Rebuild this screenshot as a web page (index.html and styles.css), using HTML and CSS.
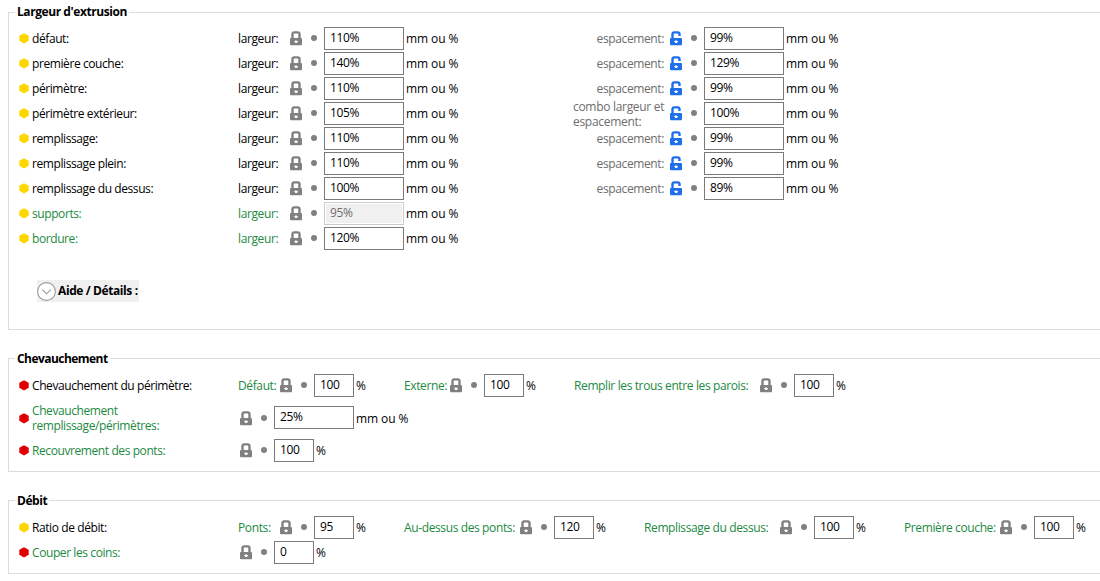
FILE: index.html
```html
<!DOCTYPE html>
<html lang="fr">
<head>
<meta charset="utf-8">
<title>Largeur d'extrusion</title>
<link rel="stylesheet" href="styles.css">
</head>
<body>
<svg class="defs" aria-hidden="true">
  <symbol id="hex" viewBox="0 0 10 11"><path d="M5 .2 9.7 2.8v5L5 10.4.3 7.8v-5z"/></symbol>
  <symbol id="lock" viewBox="0 0 12 15"><path d="M2.5 8V3.2Q2.5 1.4 4.3 1.4H7.7Q9.5 1.4 9.5 3.2V8" fill="none" stroke="currentColor" stroke-width="2.4"/><rect y="7" width="12" height="7.2" rx="1"/><path d="M4 10.2h1.4V9l2.8 1.5L6.9 12H5V11H4z" fill="#fff"/></symbol>
  <symbol id="unlock" viewBox="0 0 12 15"><path d="M2.5 8V3.2Q2.5 1.4 4.3 1.4H7.7Q9.5 1.4 9.5 3.2V5" fill="none" stroke="currentColor" stroke-width="2.4"/><rect y="7" width="12" height="7.2" rx="1"/><path d="M4 10.2h1.4V9l2.8 1.5L6.9 12H5V11H4z" fill="#fff"/></symbol>
  <symbol id="dot" viewBox="0 0 6 7"><circle cx="3" cy="3" r="3"/></symbol>
</svg>

<section class="group extrusion">
  <h2>Largeur d'extrusion</h2>
  <div class="rows">
    <div class="row"><svg class="hex"><use href="#hex"/></svg><span class="name">défaut:</span>
      <div class="field"><span class="label">largeur:</span><svg class="lock"><use href="#lock"/></svg><svg class="dot"><use href="#dot"/></svg><span class="input wide">110%</span><span class="unit">mm ou %</span></div>
      <div class="field muted"><span class="label">espacement:</span><svg class="lock open"><use href="#unlock"/></svg><svg class="dot"><use href="#dot"/></svg><span class="input wide">99%</span><span class="unit">mm ou %</span></div></div>
    <div class="row"><svg class="hex"><use href="#hex"/></svg><span class="name">première couche:</span>
      <div class="field"><span class="label">largeur:</span><svg class="lock"><use href="#lock"/></svg><svg class="dot"><use href="#dot"/></svg><span class="input wide">140%</span><span class="unit">mm ou %</span></div>
      <div class="field muted"><span class="label">espacement:</span><svg class="lock open"><use href="#unlock"/></svg><svg class="dot"><use href="#dot"/></svg><span class="input wide">129%</span><span class="unit">mm ou %</span></div></div>
    <div class="row"><svg class="hex"><use href="#hex"/></svg><span class="name">périmètre:</span>
      <div class="field"><span class="label">largeur:</span><svg class="lock"><use href="#lock"/></svg><svg class="dot"><use href="#dot"/></svg><span class="input wide">110%</span><span class="unit">mm ou %</span></div>
      <div class="field muted"><span class="label">espacement:</span><svg class="lock open"><use href="#unlock"/></svg><svg class="dot"><use href="#dot"/></svg><span class="input wide">99%</span><span class="unit">mm ou %</span></div></div>
    <div class="row"><svg class="hex"><use href="#hex"/></svg><span class="name">périmètre extérieur:</span>
      <div class="field"><span class="label">largeur:</span><svg class="lock"><use href="#lock"/></svg><svg class="dot"><use href="#dot"/></svg><span class="input wide">105%</span><span class="unit">mm ou %</span></div>
      <div class="field muted"><span class="label combo">combo largeur et<br>espacement:</span><svg class="lock open"><use href="#unlock"/></svg><svg class="dot"><use href="#dot"/></svg><span class="input wide">100%</span><span class="unit">mm ou %</span></div></div>
    <div class="row"><svg class="hex"><use href="#hex"/></svg><span class="name">remplissage:</span>
      <div class="field"><span class="label">largeur:</span><svg class="lock"><use href="#lock"/></svg><svg class="dot"><use href="#dot"/></svg><span class="input wide">110%</span><span class="unit">mm ou %</span></div>
      <div class="field muted"><span class="label">espacement:</span><svg class="lock open"><use href="#unlock"/></svg><svg class="dot"><use href="#dot"/></svg><span class="input wide">99%</span><span class="unit">mm ou %</span></div></div>
    <div class="row"><svg class="hex"><use href="#hex"/></svg><span class="name">remplissage plein:</span>
      <div class="field"><span class="label">largeur:</span><svg class="lock"><use href="#lock"/></svg><svg class="dot"><use href="#dot"/></svg><span class="input wide">110%</span><span class="unit">mm ou %</span></div>
      <div class="field muted"><span class="label">espacement:</span><svg class="lock open"><use href="#unlock"/></svg><svg class="dot"><use href="#dot"/></svg><span class="input wide">99%</span><span class="unit">mm ou %</span></div></div>
    <div class="row"><svg class="hex"><use href="#hex"/></svg><span class="name">remplissage du dessus:</span>
      <div class="field"><span class="label">largeur:</span><svg class="lock"><use href="#lock"/></svg><svg class="dot"><use href="#dot"/></svg><span class="input wide">100%</span><span class="unit">mm ou %</span></div>
      <div class="field muted"><span class="label">espacement:</span><svg class="lock open"><use href="#unlock"/></svg><svg class="dot"><use href="#dot"/></svg><span class="input wide">89%</span><span class="unit">mm ou %</span></div></div>
    <div class="row"><svg class="hex"><use href="#hex"/></svg><span class="name green">supports:</span>
      <div class="field"><span class="label green">largeur:</span><svg class="lock"><use href="#lock"/></svg><svg class="dot"><use href="#dot"/></svg><span class="input wide disabled">95%</span><span class="unit">mm ou %</span></div></div>
    <div class="row"><svg class="hex"><use href="#hex"/></svg><span class="name green">bordure:</span>
      <div class="field"><span class="label green">largeur:</span><svg class="lock"><use href="#lock"/></svg><svg class="dot"><use href="#dot"/></svg><span class="input wide">120%</span><span class="unit">mm ou %</span></div></div>
  </div>
  <div class="help"><svg class="chevron" viewBox="0 0 19 19"><circle cx="9.5" cy="9.5" r="8.9"/><path d="M5.2 7.6 9.5 11.8 13.8 7.6"/></svg><span>Aide / Détails :</span></div>
</section>

<section class="group overlap">
  <h2>Chevauchement</h2>
  <div class="rows">
    <div class="row"><svg class="hex red"><use href="#hex"/></svg><span class="name">Chevauchement du périmètre:</span>
      <div class="field"><span class="label green">Défaut:</span><svg class="lock"><use href="#lock"/></svg><svg class="dot"><use href="#dot"/></svg><span class="input">100</span><span class="unit">%</span></div>
      <div class="field"><span class="label green">Externe:</span><svg class="lock"><use href="#lock"/></svg><svg class="dot"><use href="#dot"/></svg><span class="input">100</span><span class="unit">%</span></div>
      <div class="field"><span class="label green">Remplir les trous entre les parois:</span><svg class="lock"><use href="#lock"/></svg><svg class="dot"><use href="#dot"/></svg><span class="input">100</span><span class="unit">%</span></div></div>
    <div class="row double"><svg class="hex red"><use href="#hex"/></svg><span class="name green">Chevauchement<br>remplissage/périmètres:</span>
      <div class="field bare"><svg class="lock"><use href="#lock"/></svg><svg class="dot"><use href="#dot"/></svg><span class="input wide">25%</span><span class="unit">mm ou %</span></div></div>
    <div class="row"><svg class="hex red"><use href="#hex"/></svg><span class="name green">Recouvrement des ponts:</span>
      <div class="field bare"><svg class="lock"><use href="#lock"/></svg><svg class="dot"><use href="#dot"/></svg><span class="input">100</span><span class="unit">%</span></div></div>
  </div>
</section>

<section class="group flow">
  <h2>Débit</h2>
  <div class="rows">
    <div class="row"><svg class="hex"><use href="#hex"/></svg><span class="name">Ratio de débit:</span>
      <div class="field"><span class="label green">Ponts:</span><svg class="lock"><use href="#lock"/></svg><svg class="dot"><use href="#dot"/></svg><span class="input">95</span><span class="unit">%</span></div>
      <div class="field"><span class="label green">Au-dessus des ponts:</span><svg class="lock"><use href="#lock"/></svg><svg class="dot"><use href="#dot"/></svg><span class="input">120</span><span class="unit">%</span></div>
      <div class="field"><span class="label green">Remplissage du dessus:</span><svg class="lock"><use href="#lock"/></svg><svg class="dot"><use href="#dot"/></svg><span class="input">100</span><span class="unit">%</span></div>
      <div class="field"><span class="label green">Première couche:</span><svg class="lock"><use href="#lock"/></svg><svg class="dot"><use href="#dot"/></svg><span class="input">100</span><span class="unit">%</span></div></div>
    <div class="row"><svg class="hex red"><use href="#hex"/></svg><span class="name green">Couper les coins:</span>
      <div class="field bare"><svg class="lock"><use href="#lock"/></svg><svg class="dot"><use href="#dot"/></svg><span class="input">0</span><span class="unit">%</span></div></div>
  </div>
</section>
</body>
</html>
```
FILE: styles.css
```css
* { box-sizing: border-box; }
html, body { height: 581px; overflow: hidden; }
body {
  margin: 0;
  padding: 12px 0 0 8px;
  background: #fff;
  color: #000;
  font: 12px/15px "Open Sans", "Noto Sans", sans-serif;
  letter-spacing: -0.25px;
}
.defs { display: none; }

.group { border: 1px solid #dcdcdc; border-right: 0; }
.extrusion { height: 318px; }
.overlap { height: 114px; margin-top: 28px; }
.flow { height: 74px; margin-top: 28px; }

h2 {
  width: max-content;
  height: 16px;
  margin: -9px 0 0 6px;
  padding: 0 2px;
  background: #fff;
  font-size: 12px;
  line-height: 16px;
  font-weight: 700;
  letter-spacing: -0.43px;
}
.overlap h2, .flow h2 { line-height: 18px; }
.overlap h2 { letter-spacing: -0.55px; }

.rows { display: grid; gap: 2px; padding: 7px 0 0 10px; }
.overlap .rows { padding-top: 8px; gap: 9px; }
.flow .rows { padding-top: 8px; }
.row { display: flex; align-items: center; height: 23px; white-space: nowrap; }
.row.double { height: 24px; }
.double .input { margin-bottom: 1px; }

.hex { width: 10px; height: 11px; margin-right: 3px; fill: #fed700; flex: none; }
.hex.red { fill: #e00000; }
.name { flex: none; width: 206px; letter-spacing: -0.41px; }
.green { color: #1c8a42; }

.field { display: flex; align-items: center; flex: none; }
.label { flex: none; width: 52px; letter-spacing: -0.38px; }
.lock { width: 12px; height: 15px; margin-right: 9px; color: #808080; fill: #808080; flex: none; }
.lock.open { color: #1f6feb; fill: #1f6feb; }
.dot { width: 6px; height: 7px; margin-right: 7px; fill: #808080; flex: none; }
.input {
  flex: none;
  width: 40px;
  height: 23px;
  padding-left: 5px;
  border: 1px solid #7a7a7a;
  background: #fff;
  line-height: 20px;
  letter-spacing: -0.4px;
}
.input.wide { width: 80px; }
.input.disabled { border-color: #ccc; background: #f0f0f0; box-shadow: inset 0 0 0 1px #fff; color: #6d6d6d; }
.unit { margin-left: 2px; letter-spacing: -0.08px; }
.bare { padding-left: 2px; }

.extrusion .field { width: 335px; }
.muted .label { width: 91px; margin-right: 6px; text-align: right; color: #6d6d6d; }
.muted .combo { text-align: left; letter-spacing: -0.3px; }

.overlap .field:nth-of-type(1) { width: 166px; }
.overlap .field:nth-of-type(2) { width: 170px; }
.overlap .field:nth-of-type(1) .label, .flow .field:nth-of-type(1) .label { width: 42px; }
.overlap .field:nth-of-type(2) .label { width: 46px; }
.overlap .field:nth-of-type(3) .label { width: 186px; }
.flow .field:nth-of-type(1) { width: 166px; }
.flow .field:nth-of-type(2) { width: 240px; }
.flow .field:nth-of-type(2) .label { width: 116px; }
.flow .field:nth-of-type(3) { width: 260px; }
.flow .field:nth-of-type(3) .label { width: 136px; }
.flow .field:nth-of-type(4) .label { width: 96px; }

.help {
  display: flex;
  align-items: center;
  gap: 2px;
  width: 102px;
  height: 22px;
  margin: 30px 0 0 28px;
  background: #f0f0f0;
  font-weight: 700;
  letter-spacing: -0.4px;
  white-space: nowrap;
}
.help span { padding-bottom: 1px; }
.chevron { width: 19px; height: 19px; fill: #fff; stroke: #999; stroke-width: 1.1; flex: none; }
```
